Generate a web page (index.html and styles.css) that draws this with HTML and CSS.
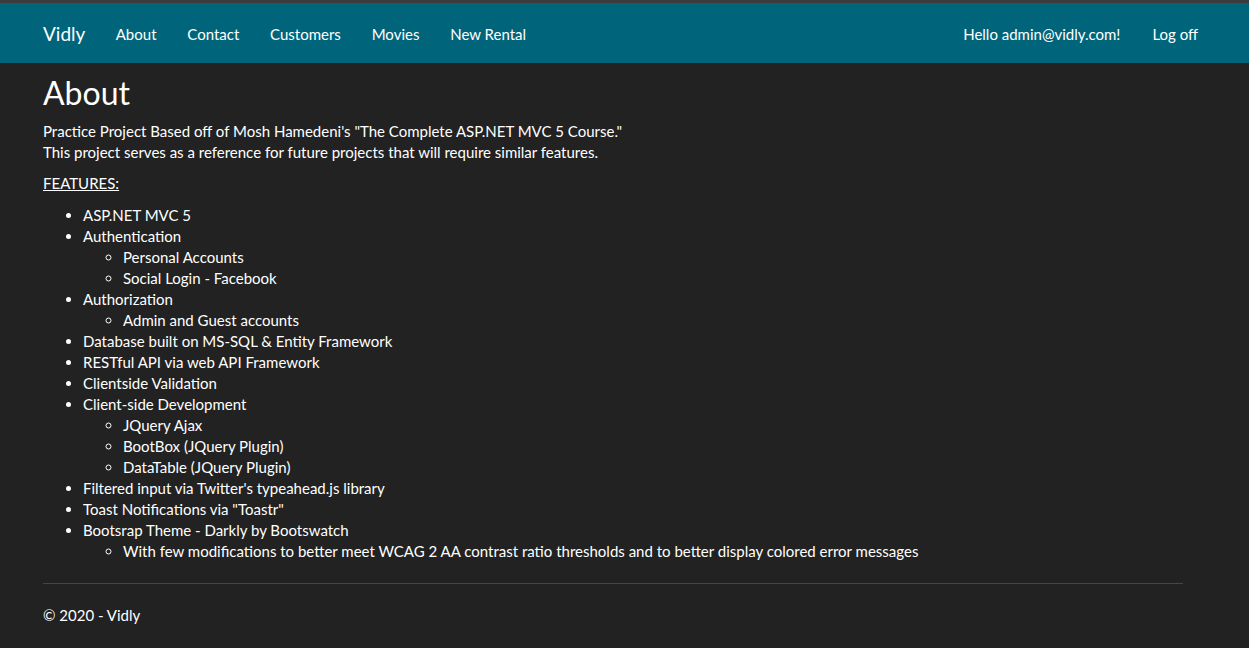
FILE: index.html
```html
<!DOCTYPE html>
<html lang="en">
<head>
<meta charset="utf-8">
<title>About - Vidly</title>
<link rel="stylesheet" href="styles.css">
</head>
<body>
<div class="topstrip"></div>
<nav class="navbar">
  <div class="container nav-inner">
    <a class="brand" href="#">Vidly</a>
    <ul class="nav">
      <li><a href="#">About</a></li>
      <li><a href="#">Contact</a></li>
      <li><a href="#">Customers</a></li>
      <li><a href="#">Movies</a></li>
      <li><a href="#">New Rental</a></li>
    </ul>
    <ul class="nav nav-right">
      <li><a href="#">Hello admin@vidly.com!</a></li>
      <li><a href="#">Log off</a></li>
    </ul>
  </div>
</nav>
<div class="container body-content">
  <h2 class="title">About</h2>
  <p>Practice Project Based off of Mosh Hamedeni's "The Complete ASP.NET MVC 5 Course."<br>This project serves as a reference for future projects that will require similar features.</p>
  <p><u>FEATURES:</u></p>
  <ul class="features">
    <li>ASP.NET MVC 5</li>
    <li>Authentication
      <ul>
        <li>Personal Accounts</li>
        <li>Social Login - Facebook</li>
      </ul>
    </li>
    <li>Authorization
      <ul>
        <li>Admin and Guest accounts</li>
      </ul>
    </li>
    <li>Database built on MS-SQL &amp; Entity Framework</li>
    <li>RESTful API via web API Framework</li>
    <li>Clientside Validation</li>
    <li>Client-side Development
      <ul>
        <li>JQuery Ajax</li>
        <li>BootBox (JQuery Plugin)</li>
        <li>DataTable (JQuery Plugin)</li>
      </ul>
    </li>
    <li>Filtered input via Twitter's typeahead.js library</li>
    <li>Toast Notifications via "Toastr"</li>
    <li>Bootsrap Theme - Darkly by Bootswatch
      <ul>
        <li>With few modifications to better meet WCAG 2 AA contrast ratio thresholds and to better display colored error messages</li>
      </ul>
    </li>
  </ul>
  <hr class="rule">
  <footer>
    <p>&copy; 2020 - Vidly</p>
  </footer>
</div>
</body>
</html>
```

FILE: styles.css
```css
* { box-sizing: border-box; }

html, body {
  margin: 0;
  padding: 0;
}

body {
  background: #222222;
  color: #ffffff;
  font-family: Lato, "Open Sans", "Liberation Sans", sans-serif;
  font-size: 15px;
  line-height: 21px;
}

.topstrip {
  height: 3px;
  background: #3c3c3c;
}

.container {
  width: 1170px;
  margin-left: 28px;
  padding: 0 15px;
}

.navbar {
  height: 60px;
  background: #00657b;
}

.nav-inner {
  display: flex;
  align-items: center;
  height: 60px;
  padding-top: 2px;
}

.navbar a {
  color: #ffffff;
  text-decoration: none;
}

.brand {
  font-size: 19px;
  margin-left: -15px;
  padding: 0 15px;
  line-height: 58px;
}

.nav {
  display: flex;
  list-style: none;
  margin: 0;
  padding: 0;
}

.nav li a {
  display: block;
  padding: 0 15.4px;
  line-height: 58px;
}

.nav-right {
  margin-left: auto;
  margin-right: -31px;
}

.nav-right li a {
  padding: 0 16px;
}

.title {
  font-size: 32px;
  font-weight: 400;
  line-height: 1.1;
  margin: 12px 0 10.5px;
}

p {
  margin: 0 0 10.5px;
}

ul {
  margin: 0 0 10.5px;
  padding-left: 40px;
}

ul ul {
  margin: 0;
  list-style-type: circle;
}

.rule {
  border: 0;
  border-top: 1px solid #464545;
  margin: 21px 0;
}
```
